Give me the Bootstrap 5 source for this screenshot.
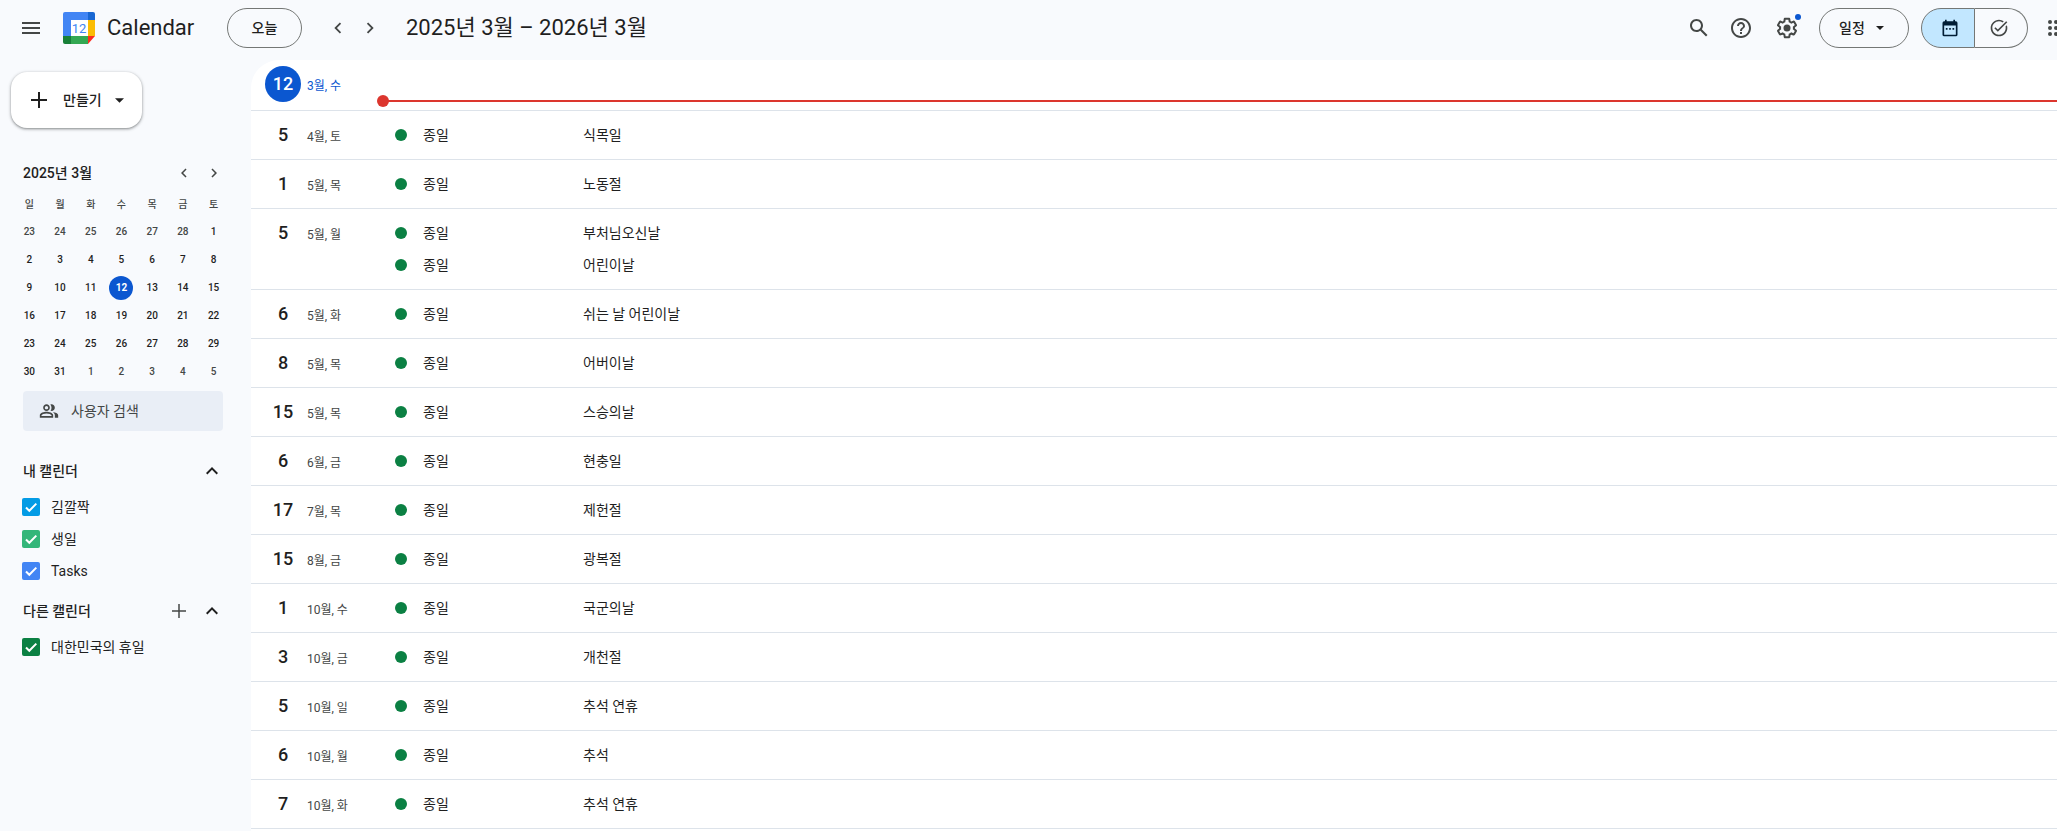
<!DOCTYPE html>
<html lang="ko">
<head>
<meta charset="utf-8">
<meta name="viewport" content="width=device-width, initial-scale=1">
<title>Calendar</title>
<link href="https://cdn.jsdelivr.net/npm/bootstrap@5.3.0/dist/css/bootstrap.min.css" rel="stylesheet">
<style>
:root { --ink: #1f1f1f; --ink-soft: #444746; --outline: #747775; --line: #dde3ea; --surface: #f8fafd; --blue: #0b57d0; }
body { font-family: Roboto, "Noto Sans CJK KR", sans-serif; font-size: 14px; line-height: 20px; color: var(--ink); background: var(--surface); overflow: hidden; }
svg { display: block; fill: currentColor; flex-shrink: 0; }
h1, h2 { margin: 0; font-weight: 500; }

.topbar { height: 60px; padding: 0 0 4px 11px; }
.icon-button { width: 40px; height: 40px; padding: 0; border: 0; border-radius: 50%; color: var(--ink-soft); display: flex; align-items: center; justify-content: center; flex-shrink: 0; }
.icon-button.compact { width: 32px; }
.brand { width: 164px; margin-left: 12px; gap: 12px; color: var(--ink); font-size: 22px; text-decoration: none; }
.today-button { width: 75px; height: 40px; border: 1px solid var(--outline); border-radius: 20px; font-size: 14px; font-weight: 500; color: var(--ink); padding: 0; }
.range-title { font-size: 22px; font-weight: 400; line-height: 28px; margin-left: 20px; white-space: nowrap; }
.header-tools { gap: 12px; }
.tool-icons { gap: 2px; }
.settings-button { margin-left: 4px; }
.notice-dot { position: absolute; top: 6px; right: 6px; width: 6px; height: 6px; border-radius: 50%; background: var(--blue); }
.view-select { width: 90px; height: 40px; padding: 0 30px 0 19px; border: 1px solid var(--outline); border-radius: 20px; color: var(--ink); font-size: 14px; font-weight: 500; background-color: transparent; background-position: right 24px center; background-size: 8px 4px; background-image: url("data:image/svg+xml,%3Csvg xmlns='http://www.w3.org/2000/svg' viewBox='0 0 8 4'%3E%3Cpath d='M0 0h8L4 4z' fill='%231f1f1f'/%3E%3C/svg%3E"); }
.mode-switch .btn { width: 54px; height: 40px; border: 1px solid var(--outline); color: var(--ink-soft); display: flex; align-items: center; justify-content: center; }
.mode-switch .btn:first-child { padding: 0 0 0 4px; border-radius: 20px 0 0 20px; background: #c2e7ff; color: #001d35; }
.mode-switch .btn:last-child { width: 53px; padding: 0 4px 0 0; border-radius: 0 20px 20px 0; }
.apps-button { margin: 0 -19px 0 -4px; }

.sidebar { width: 251px; flex-shrink: 0; padding: 12px 23px 0 23px; }
.create-button { width: 131px; height: 56px; margin-left: -12px; padding: 0 18px 0 16px; border: 0; border-radius: 16px; background: #fff; box-shadow: 0 1px 2px rgba(60,64,67,.4), 0 1px 3px 1px rgba(60,64,67,.2); font-size: 14px; font-weight: 500; color: var(--ink); gap: 12px; }
.create-button:hover { background: #fff; }
.month-head { width: 206px; height: 32px; margin-top: 29px; font-size: 14px; }
.month-head .icon-button { width: 30px; height: 30px; }
.month-grid { width: 215px; margin: 1px 0 5px -9px; table-layout: fixed; font-size: 10px; line-height: 24px; font-weight: 500; text-align: center; color: var(--ink); }
.month-grid th, .month-grid td { height: 28px; padding: 2px 0; font-weight: 500; }
.month-grid th { padding: 3px 0 1px; }
.month-grid th, .month-grid .outside { color: var(--ink-soft); }
.month-grid .today { display: inline-block; width: 24px; height: 24px; border-radius: 50%; background: var(--blue); color: #fff; font-weight: 700; vertical-align: top; }
.people-search { width: 200px; height: 40px; padding-left: 16px; gap: 12px; border-radius: 4px; background: #e9eef6; color: var(--ink-soft); }
.people-search input { width: 100%; border: 0; padding: 0; background: transparent; font-size: 14px; color: var(--ink-soft); outline: 0; }
.people-search input::placeholder { color: var(--ink-soft); opacity: 1; }
.group-head { height: 40px; font-size: 14px; }
.group-head h2, .month-head h2 { font-size: 14px; line-height: 20px; }
.group-head .icon-button { width: 33px; height: 32px; color: var(--ink); }
.calendar-check { height: 32px; gap: 11px; margin: 0 0 0 -1px; }
.calendar-check .form-check-input { width: 18px; height: 18px; margin: 0; float: none; border: 0; border-radius: 2px; background-color: var(--tint); background-size: 18px 18px; }
.calendar-check .form-check-input:checked[type=checkbox] { background-image: url("data:image/svg+xml,%3Csvg xmlns='http://www.w3.org/2000/svg' viewBox='0 0 18 18'%3E%3Cpath d='M4 9.5l3.3 3.3L14.3 5.600' fill='none' stroke='%23fff' stroke-width='2'/%3E%3C/svg%3E"); }
.tint-sky { --tint: #039be5; } .tint-sage { --tint: #33b679; } .tint-blue { --tint: #4285f4; } .tint-green { --tint: #0b8043; }

.agenda { background: #fff; border-top-left-radius: 28px; overflow: hidden; min-width: 0; min-height: calc(100vh - 60px); }
.day-row { border-bottom: 1px solid var(--line); padding-left: 14px; }
.day-number { width: 36px; height: 36px; margin-top: 6px; border-radius: 50%; line-height: 36px; font-size: 18px; font-weight: 500; text-align: center; flex-shrink: 0; }
.day-label { width: 88px; margin: 16px 0 0 6px; font-size: 12px; line-height: 20px; color: var(--ink-soft); flex-shrink: 0; white-space: nowrap; }
.day-events { padding: 8px 0; }
.event-line { height: 32px; color: var(--ink); text-decoration: none; }
.event-line::before { content: ""; width: 12px; height: 12px; margin-right: 16px; border-radius: 50%; background: #0b8043; }
.event-time { width: 160px; }
.is-today { height: 51px; }
.is-today .day-number { background: var(--blue); color: #fff; }
.is-today .day-label { color: var(--blue); }
.now-line { position: absolute; left: 132px; right: 0; bottom: 8px; height: 2px; background: #dc362e; }
.now-line::before { content: ""; position: absolute; left: -6px; top: -5px; width: 12px; height: 12px; border-radius: 50%; background: #dc362e; }
</style>
</head>
<body>
<header class="topbar d-flex align-items-center">
  <button class="btn icon-button" type="button" aria-label="기본 메뉴"><svg width="24" height="24" viewBox="0 0 24 24"><path d="M3 18h18v-2H3v2zm0-5h18v-2H3v2zm0-7v2h18V6H3z"/></svg></button>
  <a class="brand d-flex align-items-center" href="#">
    <svg width="32" height="32" viewBox="0 0 32 32" aria-hidden="true">
      <path d="M8 8h17v16H8z" fill="#fff"/>
      <path d="M2 0h23v8H8v16H0V2a2 2 0 0 1 2-2z" fill="#4285f4"/>
      <path d="M25 0h5a2 2 0 0 1 2 2v6h-7z" fill="#1967d2"/>
      <path d="M25 8h7v16h-7z" fill="#fbbc04"/>
      <path d="M8 24h17v8H8z" fill="#34a853"/>
      <path d="M0 24h8v8H2a2 2 0 0 1-2-2z" fill="#188038"/>
      <path d="M25 24h7l-7 8z" fill="#fc2c1f"/>
      <text x="16" y="20.500" text-anchor="middle" font-size="13" fill="#4285f4">12</text>
    </svg>
    <span>Calendar</span>
  </a>
  <button class="btn today-button" type="button">오늘</button>
  <div class="d-flex ms-3 ps-1">
    <button class="btn icon-button compact" type="button" aria-label="이전"><svg width="22" height="22" viewBox="0 0 24 24"><path d="M15.410 7.410L14 6l-6 6 6 6 1.410-1.410L10.830 12z"/></svg></button>
    <button class="btn icon-button compact" type="button" aria-label="다음"><svg width="22" height="22" viewBox="0 0 24 24"><path d="M10 6L8.590 7.410 13.170 12l-4.580 4.590L10 18l6-6z"/></svg></button>
  </div>
  <h1 class="range-title">2025년 3월 – 2026년 3월</h1>
  <div class="header-tools d-flex align-items-center ms-auto">
    <div class="tool-icons d-flex">
      <button class="btn icon-button" type="button" aria-label="검색"><svg width="24" height="24" viewBox="0 0 24 24"><path d="M20.49 19l-5.730-5.730C15.530 12.200 16 10.910 16 9.500 16 5.910 13.090 3 9.500 3S3 5.910 3 9.500 5.910 16 9.500 16c1.410 0 2.700-.470 3.770-1.240L19 20.490 20.490 19zM5 9.500C5 7.010 7.010 5 9.500 5S14 7.010 14 9.500 11.990 14 9.500 14 5 11.990 5 9.500z"/></svg></button>
      <button class="btn icon-button" type="button" aria-label="지원"><svg width="24" height="24" viewBox="0 0 24 24"><path d="M11 18h2v-2h-2v2zm1-16C6.480 2 2 6.480 2 12s4.480 10 10 10 10-4.480 10-10S17.520 2 12 2zm0 18c-4.410 0-8-3.590-8-8s3.590-8 8-8 8 3.590 8 8-3.590 8-8 8zm0-14c-2.210 0-4 1.790-4 4h2c0-1.100.900-2 2-2s2 .900 2 2c0 2-3 1.750-3 5h2c0-2.250 3-2.500 3-5 0-2.210-1.790-4-4-4z"/></svg></button>
      <button class="btn icon-button settings-button position-relative" type="button" aria-label="설정 메뉴"><svg width="24" height="24" viewBox="0 0 24 24"><path d="M13.85 22.25h-3.700c-.740 0-1.360-.540-1.450-1.270l-.270-1.890c-.270-.140-.530-.290-.790-.460l-1.800.720c-.700.260-1.470-.030-1.810-.650L2.200 15.530c-.350-.660-.200-1.440.360-1.880l1.530-1.190c-.010-.150-.020-.300-.020-.460 0-.150.010-.310.020-.460l-1.520-1.190c-.590-.450-.740-1.260-.370-1.880l1.850-3.190c.340-.620 1.110-.900 1.790-.630l1.810.730c.260-.170.520-.320.780-.460l.270-1.910c.090-.700.710-1.250 1.440-1.250h3.700c.740 0 1.360.540 1.450 1.270l.270 1.890c.270.140.530.290.790.460l1.800-.720c.710-.260 1.480.030 1.820.650l1.840 3.180c.360.660.200 1.440-.360 1.880l-1.520 1.190c.010.150.020.300.020.460s-.010.310-.020.460l1.520 1.190c.560.450.720 1.230.370 1.860l-1.860 3.220c-.340.620-1.110.900-1.800.630l-1.800-.720c-.260.170-.520.320-.780.460l-.270 1.910c-.100.680-.720 1.220-1.460 1.220zm-3.230-2h2.760l.370-2.550.530-.220c.440-.180.880-.440 1.340-.780l.450-.340 2.380.960 1.380-2.400-2.030-1.580.070-.560c.030-.260.060-.510.060-.780s-.030-.530-.060-.780l-.070-.560 2.030-1.580-1.390-2.400-2.390.960-.450-.350c-.420-.320-.870-.580-1.330-.770l-.520-.220-.370-2.550h-2.760l-.370 2.550-.530.210c-.440.190-.880.440-1.340.790l-.450.330-2.380-.950-1.390 2.390 2.030 1.580-.070.560a7 7 0 0 0-.060.790c0 .260.020.530.060.780l.070.560-2.030 1.580 1.380 2.400 2.390-.960.450.350c.430.330.860.580 1.330.770l.530.220.380 2.550z"/><circle cx="12" cy="12" r="3.500"/></svg><span class="notice-dot"></span></button>
    </div>
    <select class="form-select view-select" aria-label="보기 선택"><option>일정</option><option>주</option><option>월</option></select>
    <div class="mode-switch d-flex">
      <button class="btn" type="button" aria-label="캘린더로 전환"><svg width="20" height="20" viewBox="0 0 24 24"><path d="M19 4h-1V2h-2v2H8V2H6v2H5a2 2 0 0 0-2 2v14a2 2 0 0 0 2 2h14a2 2 0 0 0 2-2V6a2 2 0 0 0-2-2zm0 16H5V9h14v11zM7 12h2v2H7zm4 0h2v2h-2zm4 0h2v2h-2z"/></svg></button>
      <button class="btn border-start-0" type="button" aria-label="Tasks로 전환"><svg width="20" height="20" viewBox="0 0 24 24"><path d="M22 5.180L10.590 16.600l-4.240-4.240 1.410-1.410 2.830 2.830 10-10L22 5.180zM19.790 10.220c.130.570.210 1.170.210 1.780 0 4.420-3.580 8-8 8s-8-3.580-8-8 3.580-8 8-8c1.580 0 3.040.460 4.280 1.250l1.440-1.440A9.900 9.900 0 0 0 12 2C6.480 2 2 6.480 2 12s4.480 10 10 10 10-4.480 10-10c0-1.190-.220-2.330-.600-3.390l-1.610 1.610z"/></svg></button>
    </div>
    <button class="btn icon-button apps-button" type="button" aria-label="Google 앱"><svg width="24" height="24" viewBox="0 0 24 24"><g><circle cx="6" cy="6" r="2"/><circle cx="12" cy="6" r="2"/><circle cx="18" cy="6" r="2"/><circle cx="6" cy="12" r="2"/><circle cx="12" cy="12" r="2"/><circle cx="18" cy="12" r="2"/><circle cx="6" cy="18" r="2"/><circle cx="12" cy="18" r="2"/><circle cx="18" cy="18" r="2"/></g></svg></button>
  </div>
</header>

<div class="d-flex">
  <aside class="sidebar">
    <button class="btn create-button d-flex align-items-center" type="button">
      <svg width="24" height="24" viewBox="0 0 24 24"><path d="M20 13h-7v7h-2v-7H4v-2h7V4h2v7h7v2z"/></svg>
      <span>만들기</span>
      <svg class="ms-auto" width="9" height="5" viewBox="0 0 10 5"><path d="M0 0h10L5 5z"/></svg>
    </button>

    <div class="month-head d-flex align-items-center">
      <h2 class="me-auto">2025년 3월</h2>
      <button class="btn icon-button" type="button" aria-label="이전 달"><svg width="18" height="18" viewBox="0 0 24 24"><path d="M15.410 7.410L14 6l-6 6 6 6 1.410-1.410L10.830 12z"/></svg></button>
      <button class="btn icon-button" type="button" aria-label="다음 달"><svg width="18" height="18" viewBox="0 0 24 24"><path d="M10 6L8.590 7.410 13.170 12l-4.580 4.590L10 18l6-6z"/></svg></button>
    </div>
    <table class="month-grid">
      <thead><tr><th>일</th><th>월</th><th>화</th><th>수</th><th>목</th><th>금</th><th>토</th></tr></thead>
      <tbody>
        <tr><td class="outside">23</td><td class="outside">24</td><td class="outside">25</td><td class="outside">26</td><td class="outside">27</td><td class="outside">28</td><td>1</td></tr>
        <tr><td>2</td><td>3</td><td>4</td><td>5</td><td>6</td><td>7</td><td>8</td></tr>
        <tr><td>9</td><td>10</td><td>11</td><td><span class="today">12</span></td><td>13</td><td>14</td><td>15</td></tr>
        <tr><td>16</td><td>17</td><td>18</td><td>19</td><td>20</td><td>21</td><td>22</td></tr>
        <tr><td>23</td><td>24</td><td>25</td><td>26</td><td>27</td><td>28</td><td>29</td></tr>
        <tr><td>30</td><td>31</td><td class="outside">1</td><td class="outside">2</td><td class="outside">3</td><td class="outside">4</td><td class="outside">5</td></tr>
      </tbody>
    </table>

    <label class="people-search d-flex align-items-center">
      <svg width="20" height="20" viewBox="0 0 24 24" aria-hidden="true"><path d="M15 8c0-1.420-.500-2.730-1.330-3.760.420-.140.860-.240 1.330-.240 2.210 0 4 1.790 4 4s-1.790 4-4 4c-.430 0-.840-.090-1.230-.210A5.980 5.980 0 0 0 15 8zm1.660 5.130C18.030 14.060 19 15.320 19 17v3h4v-3c0-2.180-3.580-3.470-6.340-3.870zM9 6c-1.100 0-2 .900-2 2s.900 2 2 2 2-.900 2-2-.900-2-2-2zm0 9c-2.700 0-5.800 1.290-6 2.010V18h12v-1c-.200-.710-3.300-2-6-2zM9 4c2.210 0 4 1.790 4 4s-1.790 4-4 4-4-1.790-4-4 1.790-4 4-4zm0 9c2.670 0 8 1.340 8 4v3H1v-3c0-2.660 5.330-4 8-4z"/></svg>
      <input type="text" placeholder="사용자 검색" aria-label="사용자 검색">
    </label>

    <section class="pt-3 mt-1">
      <div class="group-head d-flex align-items-center">
        <h2 class="me-auto">내 캘린더</h2>
        <button class="btn icon-button" type="button" aria-label="내 캘린더 접기"><svg width="24" height="24" viewBox="0 0 24 24"><path d="M12 8l-6 6 1.410 1.410L12 10.830l4.590 4.580L18 14z"/></svg></button>
      </div>
      <div class="calendar-check tint-sky d-flex align-items-center"><input class="form-check-input" type="checkbox" id="cal-own" checked><label for="cal-own">김깔짝</label></div>
      <div class="calendar-check tint-sage d-flex align-items-center"><input class="form-check-input" type="checkbox" id="cal-birthday" checked><label for="cal-birthday">생일</label></div>
      <div class="calendar-check tint-blue d-flex align-items-center"><input class="form-check-input" type="checkbox" id="cal-tasks" checked><label for="cal-tasks">Tasks</label></div>
    </section>
    <section class="pt-1">
      <div class="group-head d-flex align-items-center">
        <h2 class="me-auto">다른 캘린더</h2>
        <button class="btn icon-button" type="button" aria-label="다른 캘린더 추가"><svg width="20" height="20" viewBox="0 0 20 20"><path fill="#444746" d="M17 10.750h-6.250V17h-1.500v-6.250H3v-1.500h6.250V3h1.500v6.250H17z"/></svg></button>
        <button class="btn icon-button" type="button" aria-label="다른 캘린더 접기"><svg width="24" height="24" viewBox="0 0 24 24"><path d="M12 8l-6 6 1.410 1.410L12 10.830l4.590 4.580L18 14z"/></svg></button>
      </div>
      <div class="calendar-check tint-green d-flex align-items-center"><input class="form-check-input" type="checkbox" id="cal-holidays" checked><label for="cal-holidays">대한민국의 휴일</label></div>
    </section>
  </aside>

  <main class="agenda flex-grow-1">
    <div class="day-row is-today position-relative d-flex"><div class="day-number">12</div><div class="day-label">3월, 수</div><div class="now-line"></div></div>
    <div class="day-row d-flex"><div class="day-number">5</div><div class="day-label">4월, 토</div><div class="day-events"><a class="event-line d-flex align-items-center" href="#"><span class="event-time">종일</span><span>식목일</span></a></div></div>
    <div class="day-row d-flex"><div class="day-number">1</div><div class="day-label">5월, 목</div><div class="day-events"><a class="event-line d-flex align-items-center" href="#"><span class="event-time">종일</span><span>노동절</span></a></div></div>
    <div class="day-row d-flex"><div class="day-number">5</div><div class="day-label">5월, 월</div><div class="day-events"><a class="event-line d-flex align-items-center" href="#"><span class="event-time">종일</span><span>부처님오신날</span></a><a class="event-line d-flex align-items-center" href="#"><span class="event-time">종일</span><span>어린이날</span></a></div></div>
    <div class="day-row d-flex"><div class="day-number">6</div><div class="day-label">5월, 화</div><div class="day-events"><a class="event-line d-flex align-items-center" href="#"><span class="event-time">종일</span><span>쉬는 날 어린이날</span></a></div></div>
    <div class="day-row d-flex"><div class="day-number">8</div><div class="day-label">5월, 목</div><div class="day-events"><a class="event-line d-flex align-items-center" href="#"><span class="event-time">종일</span><span>어버이날</span></a></div></div>
    <div class="day-row d-flex"><div class="day-number">15</div><div class="day-label">5월, 목</div><div class="day-events"><a class="event-line d-flex align-items-center" href="#"><span class="event-time">종일</span><span>스승의날</span></a></div></div>
    <div class="day-row d-flex"><div class="day-number">6</div><div class="day-label">6월, 금</div><div class="day-events"><a class="event-line d-flex align-items-center" href="#"><span class="event-time">종일</span><span>현충일</span></a></div></div>
    <div class="day-row d-flex"><div class="day-number">17</div><div class="day-label">7월, 목</div><div class="day-events"><a class="event-line d-flex align-items-center" href="#"><span class="event-time">종일</span><span>제헌절</span></a></div></div>
    <div class="day-row d-flex"><div class="day-number">15</div><div class="day-label">8월, 금</div><div class="day-events"><a class="event-line d-flex align-items-center" href="#"><span class="event-time">종일</span><span>광복절</span></a></div></div>
    <div class="day-row d-flex"><div class="day-number">1</div><div class="day-label">10월, 수</div><div class="day-events"><a class="event-line d-flex align-items-center" href="#"><span class="event-time">종일</span><span>국군의날</span></a></div></div>
    <div class="day-row d-flex"><div class="day-number">3</div><div class="day-label">10월, 금</div><div class="day-events"><a class="event-line d-flex align-items-center" href="#"><span class="event-time">종일</span><span>개천절</span></a></div></div>
    <div class="day-row d-flex"><div class="day-number">5</div><div class="day-label">10월, 일</div><div class="day-events"><a class="event-line d-flex align-items-center" href="#"><span class="event-time">종일</span><span>추석 연휴</span></a></div></div>
    <div class="day-row d-flex"><div class="day-number">6</div><div class="day-label">10월, 월</div><div class="day-events"><a class="event-line d-flex align-items-center" href="#"><span class="event-time">종일</span><span>추석</span></a></div></div>
    <div class="day-row d-flex"><div class="day-number">7</div><div class="day-label">10월, 화</div><div class="day-events"><a class="event-line d-flex align-items-center" href="#"><span class="event-time">종일</span><span>추석 연휴</span></a></div></div>
  </main>
</div>
<script src="https://cdn.jsdelivr.net/npm/bootstrap@5.3.0/dist/js/bootstrap.bundle.min.js"></script>
</body>
</html>
